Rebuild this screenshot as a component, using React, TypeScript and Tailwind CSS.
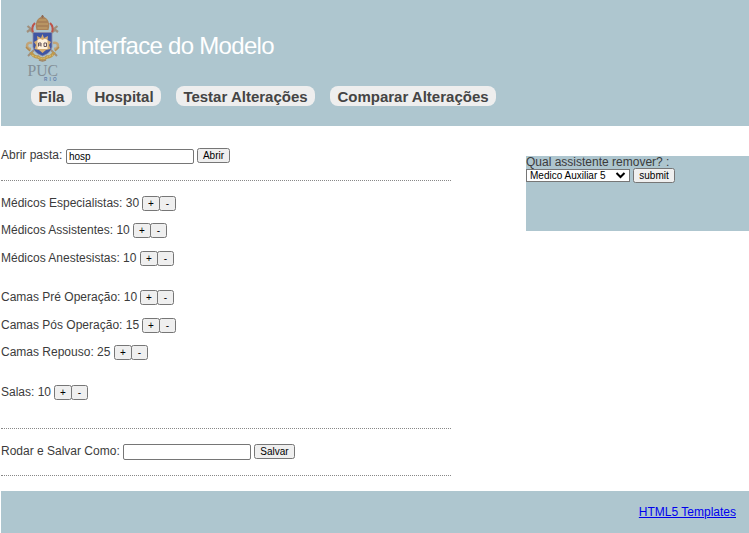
import React from "react";

const BUTTON =
  "box-border shrink-0 rounded-[2.5px] border border-[#767676] bg-[#efefef] p-0 text-center text-[10px] leading-[13px] text-black";

function Crest() {
  return (
    <svg width="40" height="72" viewBox="0 0 40 72" className="block shrink-0">
      <g fill="none" stroke="#a08f7c" strokeWidth="2">
        <path d="M7 16 L13 21 M32 16 L26 21 M11 36 L5 42 M28 36 L34 42" />
        <path d="M4.5 12 L8 15 L4 18 M34.5 12 L31 15 L35 18" strokeWidth="2.2" />
      </g>
      <path d="M12 9 Q8 13 10 18 M27 9 Q31 13 29 18" fill="none" stroke="#bd5349" strokeWidth="2" />
      <path d="M13.5 16 Q11.5 9 15 5 Q19.5 0 24 5 Q27.5 9 25.5 16 Z" fill="#a98259" />
      <path d="M15.5 6 H23.5 M14 10 H25 M14.5 14 H24.5" stroke="#c8a56e" strokeWidth="1.2" />
      <path d="M19.5 1 V4 M18 2.3 H21" stroke="#8d6956" strokeWidth="1" />
      <path d="M9 29 Q4 28 4 32 Q4 35 8 35 M30 29 Q35 28 35 32 Q35 35 31 35" fill="none" stroke="#c2a478" strokeWidth="2.6" />
      <path d="M3 33 L7 37 M36 33 L32 37" stroke="#b18b51" strokeWidth="1.5" />
      <path d="M10 18.5 H29 V33 Q28 39 19.5 42 Q11 39 10 33 Z" fill="#3f55a4" stroke="#8f8ba3" strokeWidth=".8" />
      <path d="M19.5 20 L21 24 L25 22 L24.5 26 L28 28 L26 31 L27.5 35 L23 36 L19.5 39 L16 36 L11.5 35 L13 31 L11 28 L14.5 26 L14 22 L18 24 Z" fill="#d5ad73" />
      <path d="M14.5 26 Q17 24 19.5 26 Q22 24 24.5 26 V35 H14.5 Z" fill="#fff1dc" />
      <path d="M15.5 32.5 V29 H18 V32.5 M15.5 31 H18 M21 29 V32.5 H23.5 V29 Z" fill="none" stroke="#66545a" strokeWidth="1" />
      <path d="M8 38 Q10 43 15 43 Q19.5 47 24 43 Q29 43 31 38" fill="none" stroke="#bd984d" strokeWidth="3.3" />
      <path d="M9 41 Q12 43 15 43 Q19.5 46 24 43 L30 41" fill="none" stroke="#dfc56f" strokeWidth="1" strokeDasharray="2 1" />
      <path d="M16 46 Q19.5 48 23 46" fill="none" stroke="#9e8261" strokeWidth="1.4" />
      <text x="4.5" y="62.3" textLength="30.5" lengthAdjust="spacingAndGlyphs" fill="#838f97" fontFamily="Liberation Serif, serif" fontSize="16">PUC</text>
      <text x="21" y="66.8" textLength="12.5" lengthAdjust="spacing" fill="#637fac" fontFamily="Liberation Sans, sans-serif" fontWeight="bold" fontSize="4.6">RIO</text>
    </svg>
  );
}

function Counter({ label, width, className = "" }: { label: string; width: string; className?: string }) {
  return (
    <div className={`flex h-[15px] ${className}`}>
      <span className={`shrink-0 whitespace-nowrap leading-[14px] ${width}`}>{label}</span>
      <button className={`${BUTTON} h-[15px] w-[18px]`}>+</button>
      <button className={`${BUTTON} -ml-px h-[15px] w-[17px]`}>-</button>
    </div>
  );
}

const navItems = [
  { label: "Fila", width: "w-[41px]" },
  { label: "Hospital", width: "w-[74px]" },
  { label: "Testar Alterações", width: "w-[139px]" },
  { label: "Comparar Alterações", width: "w-[166px]" },
];

export default function App() {
  return (
    <div className="h-[533px] w-[749px] overflow-hidden bg-white pl-px font-['Liberation_Sans',Arial,sans-serif] text-[12px] text-[#3b3b3b]">
      <header className="h-[126px] bg-[#aec6cf] pt-[14px]">
        <div className="flex h-[72px] pl-[22px]">
          <Crest />
          <h1 className="ml-[12px] mt-[18px] whitespace-nowrap text-[24px] leading-[28px] tracking-[-0.7px] text-white">Interface do Modelo</h1>
        </div>
        <nav className="flex gap-[15px] pl-[30px]">
          {navItems.map((item) => (
            <a key={item.label} className={`h-[20px] shrink-0 whitespace-nowrap rounded-[8px] bg-[#eee] text-center text-[15px] font-bold leading-[21px] text-[#444] ${item.width}`}>
              {item.label}
            </a>
          ))}
        </nav>
      </header>
      <div className="flex h-[365px]">
        <main className="w-[450px]">
          <section className="flex h-[55px] border-b border-dotted border-[#888] pt-[22px]">
            <label className="w-[65px] whitespace-nowrap leading-[14px]">Abrir pasta:</label>
            <input defaultValue="hosp" className="mt-px h-[15px] w-[128px] rounded-[2px] border border-[#767676] bg-white px-[2px] py-0 text-[10px] leading-[13px] text-black outline-none" />
            <button className={`${BUTTON} ml-[3px] h-[15px] w-[33px]`}>Abrir</button>
          </section>
          <section className="h-[248px] border-b border-dotted border-[#888] pt-[15px]">
            <Counter label="Médicos Especialistas: 30" width="w-[141px]" />
            <Counter label="Médicos Assistentes: 10" width="w-[132px]" className="mt-[12px]" />
            <Counter label="Médicos Anestesistas: 10" width="w-[139px]" className="mt-[13px]" />
            <Counter label="Camas Pré Operação: 10" width="w-[139px]" className="mt-[24px]" />
            <Counter label="Camas Pós Operação: 15" width="w-[141px]" className="mt-[13px]" />
            <Counter label="Camas Repouso: 25" width="w-[113px]" className="mt-[12px]" />
            <Counter label="Salas: 10" width="w-[53px]" className="mt-[25px]" />
          </section>
          <section className="flex h-[47px] border-b border-dotted border-[#888] pt-[15px]">
            <label className="w-[122px] whitespace-nowrap leading-[14px]">Rodar e Salvar Como:</label>
            <input className="h-[16px] w-[128px] rounded-[2px] border border-[#767676] bg-white px-[2px] py-0 text-[10px] outline-none" />
            <button className={`${BUTTON} ml-[3px] h-[15px] w-[41px]`}>Salvar</button>
          </section>
        </main>
        <aside className="ml-[75px] mt-[30px] h-[75px] w-[223px] bg-[#aec6cf]">
          <p className="h-[12px] whitespace-nowrap leading-[12px]">Qual assistente remover? :</p>
          <div className="flex">
            <button className="mt-px flex h-[13px] w-[104px] items-center justify-between border border-[#767676] bg-white pl-[3px] pr-[3px] text-[10px] leading-[11px] text-black">
              <span className="whitespace-nowrap">Medico Auxiliar 5</span>
              <svg width="11" height="7" viewBox="0 0 11 7"><path d="M1.5 1 L5.5 5 L9.5 1" fill="none" stroke="black" strokeWidth="2" /></svg>
            </button>
            <button className={`${BUTTON} ml-[3px] h-[15px] w-[42px]`}>submit</button>
          </div>
        </aside>
      </div>
      <footer className="h-[42px] bg-[#aec6cf] pr-[13px] pt-[14px] text-right">
        <a className="block leading-[14px] text-[#0000ee] underline">HTML5 Templates</a>
      </footer>
    </div>
  );
}
